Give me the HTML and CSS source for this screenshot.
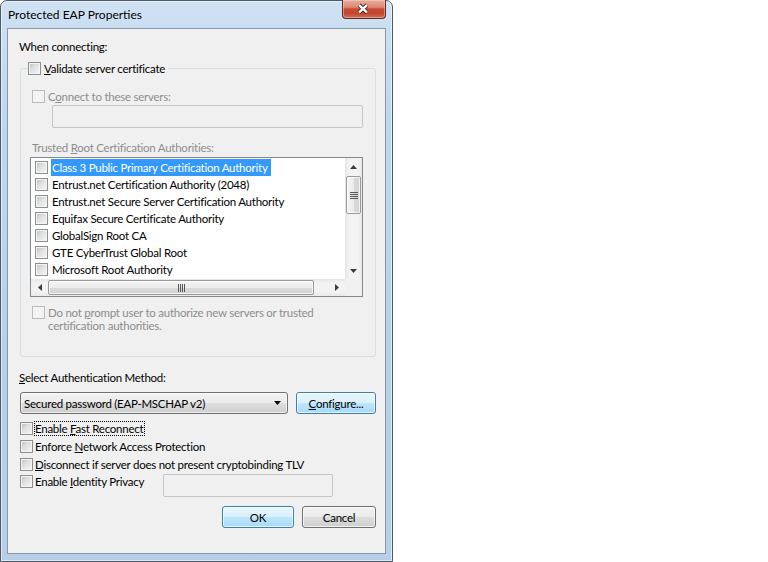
FILE: index.html
```html
<!DOCTYPE html>
<html>
<head>
<meta charset="utf-8">
<title>Protected EAP Properties</title>
<link rel="stylesheet" href="styles.css">
</head>
<body>
<div class="window">
  <div class="titlebar">
    <span class="title">Protected EAP Properties</span>
    <div class="close">
      <svg width="44" height="18" viewBox="0 0 44 18">
        <path d="M17.5 5 L25.5 12.5 M25.5 5 L17.5 12.5" stroke="#3b2a26" stroke-width="4.2" fill="none"/>
        <path d="M17.5 5 L25.5 12.5 M25.5 5 L17.5 12.5" stroke="#ffffff" stroke-width="2.4" fill="none"/>
      </svg>
    </div>
  </div>
  <div class="client">
    <div class="when">When connecting:</div>
    <fieldset class="group">
      <legend class="legend"><span class="cb"></span><span><u>V</u>alidate server certificate</span></legend>
      <div class="check disabled connect"><span class="cb dis"></span><span>C<u>o</u>nnect to these servers:</span></div>
      <div class="edit servers"></div>
      <div class="dislabel trusted">Trusted <u>R</u>oot Certification Authorities:</div>
      <div class="listbox">
        <div class="rows">
          <div class="row"><span class="cb"></span><span class="item sel">Class 3 Public Primary Certification Authority</span></div>
          <div class="row"><span class="cb"></span><span class="item">Entrust.net Certification Authority (2048)</span></div>
          <div class="row"><span class="cb"></span><span class="item">Entrust.net Secure Server Certification Authority</span></div>
          <div class="row"><span class="cb"></span><span class="item">Equifax Secure Certificate Authority</span></div>
          <div class="row"><span class="cb"></span><span class="item">GlobalSign Root CA</span></div>
          <div class="row"><span class="cb"></span><span class="item">GTE CyberTrust Global Root</span></div>
          <div class="row"><span class="cb"></span><span class="item">Microsoft Root Authority</span></div>
        </div>
        <div class="vscroll">
          <div class="sbtn"><svg width="7" height="4" viewBox="0 0 7 4"><path d="M0 4 H7 L3.5 0 Z" fill="#3c3c3c"/></svg></div>
          <div class="vthumb"><span class="vgrip"></span></div>
          <div class="spacer"></div>
          <div class="sbtn"><svg width="7" height="4" viewBox="0 0 7 4"><path d="M0 0 H7 L3.5 4 Z" fill="#3c3c3c"/></svg></div>
        </div>
        <div class="hscroll">
          <div class="sbtn"><svg width="4" height="7" viewBox="0 0 4 7"><path d="M4 0 V7 L0 3.5 Z" fill="#3c3c3c"/></svg></div>
          <div class="hthumb"><span class="hgrip"></span></div>
          <div class="spacer"></div>
          <div class="sbtn"><svg width="4" height="7" viewBox="0 0 4 7"><path d="M0 0 V7 L4 3.5 Z" fill="#3c3c3c"/></svg></div>
        </div>
        <div class="corner"></div>
      </div>
      <div class="check disabled prompt"><span class="cb dis"></span><span>Do not <u>p</u>rompt user to authorize new servers or trusted<br>certification authorities.</span></div>
    </fieldset>
    <div class="method"><u>S</u>elect Authentication Method:</div>
    <div class="method-row">
      <div class="combo"><span>Secured password (EAP-MSCHAP v2)</span><svg class="drop" width="7" height="4" viewBox="0 0 7 4"><path d="M0 0 H7 L3.5 4 Z" fill="#000"/></svg></div>
      <div class="btn default configure"><span><u>C</u>onfigure...</span></div>
    </div>
    <div class="options">
      <div class="opt"><span class="cb"></span><span class="olabel focus">Enable <u>F</u>ast Reconnect</span></div>
      <div class="opt"><span class="cb"></span><span class="olabel">Enforce <u>N</u>etwork Access Protection</span></div>
      <div class="opt"><span class="cb"></span><span class="olabel"><u>D</u>isconnect if server does not present cryptobinding TLV</span></div>
      <div class="opt identity">
        <div class="opt-left"><span class="cb"></span><span class="olabel">Enable <u>I</u>dentity Privacy</span></div>
        <div class="edit identity-edit"></div>
      </div>
    </div>
    <div class="buttons">
      <div class="btn default ok">OK</div>
      <div class="btn cancel">Cancel</div>
    </div>
  </div>
</div>
</body>
</html>
```
FILE: styles.css
```css
html, body {
  margin: 0;
  background: #ffffff;
}
body {
  font-family: Lato, "Liberation Sans", sans-serif;
  font-size: 11.5px;
  letter-spacing: -0.25px;
  color: #000;
}
u { text-decoration: underline; text-underline-offset: 1px; }

.window {
  width: 393px;
  height: 562px;
  box-sizing: border-box;
  border: 1px solid #4c5a69;
  border-radius: 7px 7px 0 0;
  background: linear-gradient(#cfe1f3 0%, #c1d7ee 20%, #bad0e9 60%, #b8cee7 100%);
  box-shadow: inset 0 0 0 1px rgba(255,255,255,0.55);
  display: flex;
  flex-direction: column;
}
.titlebar {
  height: 27px;
  flex: none;
  display: flex;
  align-items: flex-start;
  padding: 0 6px 0 7px;
}
.title {
  line-height: 27px;
  font-size: 12px;
  letter-spacing: 0;
  color: #000;
}
.close {
  margin-left: auto;
  margin-top: -1px;
  width: 44px;
  height: 19px;
  box-sizing: border-box;
  border: 1px solid #5c2a22;
  border-top: none;
  border-radius: 0 0 4px 4px;
  background: linear-gradient(#e9ab9b 0%, #dc8a76 40%, #c9492f 50%, #c34630 75%, #d0705a 100%);
  box-shadow: inset 0 0 0 1px rgba(255,220,210,0.45);
  display: flex;
  align-items: center;
  justify-content: center;
}
.close svg { display: block; margin-left: -1px; }

.client {
  flex: 1;
  margin: 0 6px 7px;
  border: 1px solid #8798ad;
  background: #f0f0f0;
  padding: 0 9px 0 12px;
  display: flex;
  flex-direction: column;
}
.when {
  margin: 10px 0 0 -1px;
  line-height: 15px;
}

.group {
  margin: 7px 0 0;
  padding: 0 12px 24px 9px;
  border: 1px solid #d5dfe5;
  border-radius: 3px;
  min-width: 0;
}
.legend {
  display: flex;
  align-items: center;
  height: 15px;
  line-height: 15px;
  margin-left: -2px;
  padding: 0 3px 0 0;
}

.cb {
  flex: none;
  display: inline-block;
  width: 13px;
  height: 13px;
  box-sizing: border-box;
  border: 1px solid #8e8f8f;
  background: linear-gradient(135deg, #b9bec4 0%, #dfe1e3 45%, #f6f6f6 100%);
  box-shadow: inset 0 0 0 1px #f4f4f4;
  margin-right: 3px;
}
.cb.dis {
  border-color: #bcbcbc;
  background: #f4f4f4;
  box-shadow: none;
}

.check {
  display: flex;
  align-items: center;
  line-height: 15px;
  margin-left: 2px;
}
.disabled { color: #8d8d8d; }
.connect { margin-top: 13px; }
.edit {
  box-sizing: border-box;
  height: 23px;
  border: 1px solid #c6c6c6;
  border-radius: 2px;
}
.servers { margin: 1px 0 0 22px; }
.dislabel { color: #8d8d8d; line-height: 15px; }
.trusted { margin: 12px 0 0 2px; }

.listbox {
  margin-top: 2px;
  height: 140px;
  box-sizing: border-box;
  border: 1px solid #828790;
  background: #fff;
  display: grid;
  grid-template-columns: 1fr 17px;
  grid-template-rows: 1fr 17px;
}
.rows {
  padding-top: 1px;
  overflow: hidden;
}
.row {
  height: 17px;
  display: flex;
  align-items: center;
  padding-left: 4px;
  white-space: nowrap;
}
.item {
  line-height: 17px;
  padding: 0 3px 0 1px;
}
.item.sel {
  background: #3399ff;
  color: #fff;
}

.vscroll {
  display: flex;
  flex-direction: column;
  background: linear-gradient(to right, #e6e6e6 0%, #f3f3f3 25%, #f3f3f3 75%, #e9e9e9 100%);
}
.hscroll {
  display: flex;
  background: linear-gradient(#e6e6e6 0%, #f3f3f3 25%, #f3f3f3 75%, #e9e9e9 100%);
}
.corner { background: #f0f0f0; }
.sbtn {
  flex: none;
  width: 17px;
  height: 17px;
  display: flex;
  align-items: center;
  justify-content: center;
}
.sbtn svg { display: block; }
.spacer { flex: 1; }
.vthumb {
  flex: none;
  margin: 1px 1px 0;
  height: 38px;
  box-sizing: border-box;
  border: 1px solid #9a9a9a;
  border-radius: 2px;
  background: linear-gradient(to right, #f4f4f4 0%, #ebebeb 50%, #dbdbdb 51%, #d3d3d3 100%);
  box-shadow: inset 0 0 0 1px rgba(255,255,255,0.7);
  display: flex;
  align-items: center;
  justify-content: center;
}
.vgrip {
  width: 8px;
  height: 7px;
  background: repeating-linear-gradient(#555 0 1px, transparent 1px 2px);
}
.hthumb {
  flex: none;
  margin: 1px 0;
  width: 266px;
  box-sizing: border-box;
  border: 1px solid #9a9a9a;
  border-radius: 2px;
  background: linear-gradient(#f4f4f4 0%, #ebebeb 50%, #dbdbdb 51%, #d3d3d3 100%);
  box-shadow: inset 0 0 0 1px rgba(255,255,255,0.7);
  display: flex;
  align-items: center;
  justify-content: center;
}
.hgrip {
  width: 7px;
  height: 8px;
  background: repeating-linear-gradient(to right, #555 0 1px, transparent 1px 2px);
}

.prompt {
  margin-top: 9px;
  align-items: flex-start;
  line-height: 13px;
}

.method {
  margin: 13px 0 0 -1px;
  line-height: 15px;
}
.method-row {
  display: flex;
  gap: 8px;
  margin-top: 7px;
}
.combo {
  width: 268px;
  height: 22px;
  box-sizing: border-box;
  border: 1px solid #707070;
  border-radius: 3px;
  background: linear-gradient(#f2f2f2 0%, #ebebeb 50%, #dddddd 51%, #cfcfcf 100%);
  box-shadow: inset 0 0 0 1px rgba(255,255,255,0.6);
  padding-left: 3px;
  display: flex;
  align-items: center;
  white-space: nowrap;
}
.combo .drop { margin-left: auto; margin-right: 6px; display: block; }

.btn {
  box-sizing: border-box;
  height: 22px;
  border: 1px solid #707070;
  border-radius: 3px;
  background: linear-gradient(#f2f2f2 0%, #ebebeb 50%, #dddddd 51%, #cfcfcf 100%);
  box-shadow: inset 0 0 0 1px rgba(255,255,255,0.7);
  display: flex;
  align-items: center;
  justify-content: center;
}
.btn.default {
  border-color: #3c7fb1;
  background: linear-gradient(#eaf6fd 0%, #d9f0fc 50%, #bee6fd 51%, #a7d9f5 100%);
}
.configure { width: 80px; }

.options { margin-top: 5px; }
.opt {
  display: flex;
  align-items: center;
  height: 18px;
}
.opt .cb { margin-right: 1px; }
.olabel {
  display: inline-block;
  line-height: 13px;
  border: 1px dotted transparent;
  padding-right: 1px;
  white-space: nowrap;
}
.olabel.focus { border-color: #000; }
.opt.identity {
  height: auto;
  align-items: flex-start;
  margin-top: 1px;
}
.opt-left {
  width: 143px;
  height: 15px;
  display: flex;
  align-items: center;
}
.identity-edit { width: 170px; }

.buttons {
  display: flex;
  justify-content: flex-end;
  gap: 8px;
  margin-top: 9px;
}
.ok { width: 72px; }
.cancel { width: 74px; }
```
